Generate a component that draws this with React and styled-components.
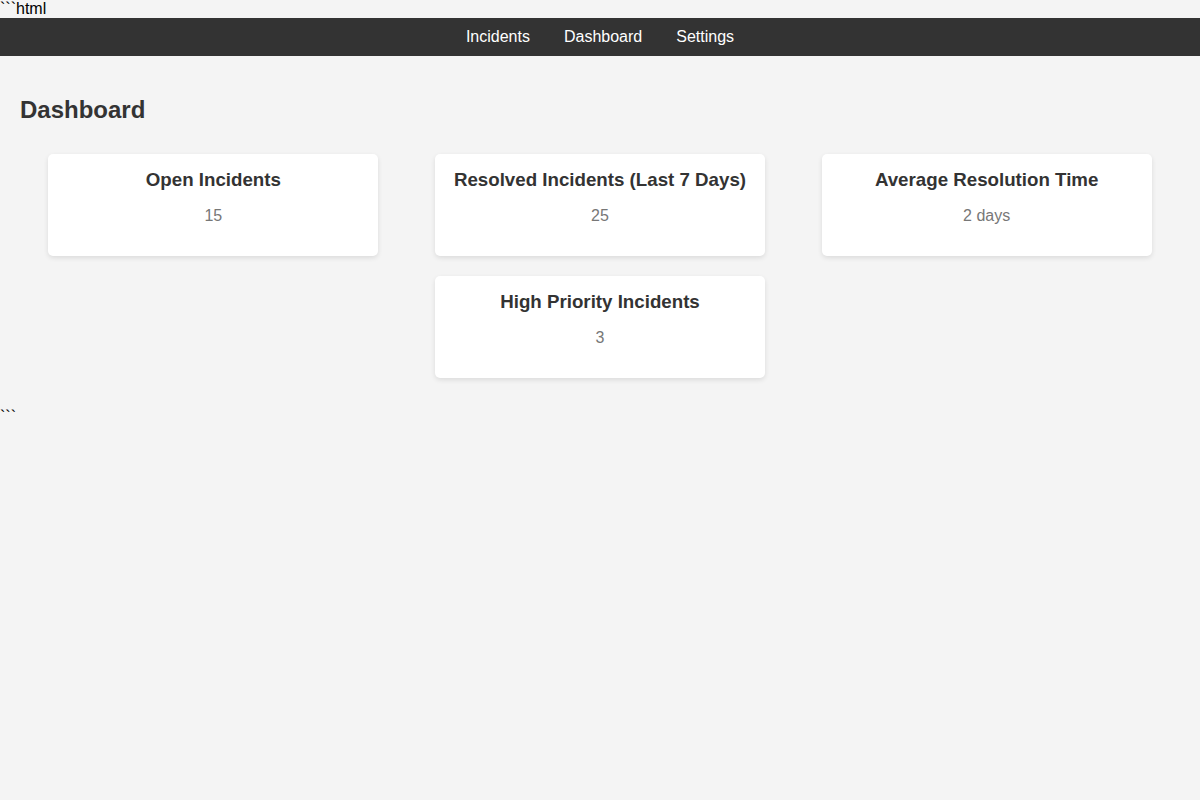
import React from 'react';
import styled, { createGlobalStyle } from 'styled-components';

const GlobalStyle = createGlobalStyle`
  body {
    margin: 0;
    background: #f4f4f4;
    font-family: "Liberation Sans", Arial, sans-serif;
    color: #000;
  }
`;

const Fence = styled.div`
  font-size: 16px;
  line-height: 18px;
`;

const NavBar = styled.nav`
  background: #333333;
  display: flex;
  justify-content: center;
  gap: 34px;
  padding: 10px 0;
`;

const NavLink = styled.a`
  color: #ffffff;
  text-decoration: none;
  font-size: 16px;
  line-height: 18px;
`;

const Main = styled.main`
  padding: 20px;
`;

const Title = styled.h2`
  margin: 20px 0;
  font-size: 24px;
  line-height: 28px;
  color: #333333;
`;

const CardGrid = styled.div`
  display: flex;
  flex-wrap: wrap;
  justify-content: space-around;
`;

const Card = styled.div`
  width: 330px;
  box-sizing: border-box;
  margin: 10px;
  padding: 15px;
  background: #ffffff;
  border-radius: 5px;
  box-shadow: 0 2px 5px rgba(0, 0, 0, 0.1);
  text-align: center;
`;

const CardTitle = styled.h3`
  margin: 0;
  font-size: 18.72px;
  line-height: 22px;
  color: #333333;
`;

const CardValue = styled.p`
  margin: 16px 0;
  font-size: 16px;
  line-height: 18px;
  color: #777777;
`;

const stats = [
  { title: 'Open Incidents', value: '15' },
  { title: 'Resolved Incidents (Last 7 Days)', value: '25' },
  { title: 'Average Resolution Time', value: '2 days' },
  { title: 'High Priority Incidents', value: '3' },
];

const App = () => {
  return (
    <>
      <GlobalStyle />
      <Fence>```html</Fence>
      <NavBar>
        <NavLink href="#">Incidents</NavLink>
        <NavLink href="#">Dashboard</NavLink>
        <NavLink href="#">Settings</NavLink>
      </NavBar>
      <Main>
        <Title>Dashboard</Title>
        <CardGrid>
          {stats.map((s) => (
            <Card key={s.title}>
              <CardTitle>{s.title}</CardTitle>
              <CardValue>{s.value}</CardValue>
            </Card>
          ))}
        </CardGrid>
      </Main>
      <Fence>```</Fence>
    </>
  );
};

export default App;
